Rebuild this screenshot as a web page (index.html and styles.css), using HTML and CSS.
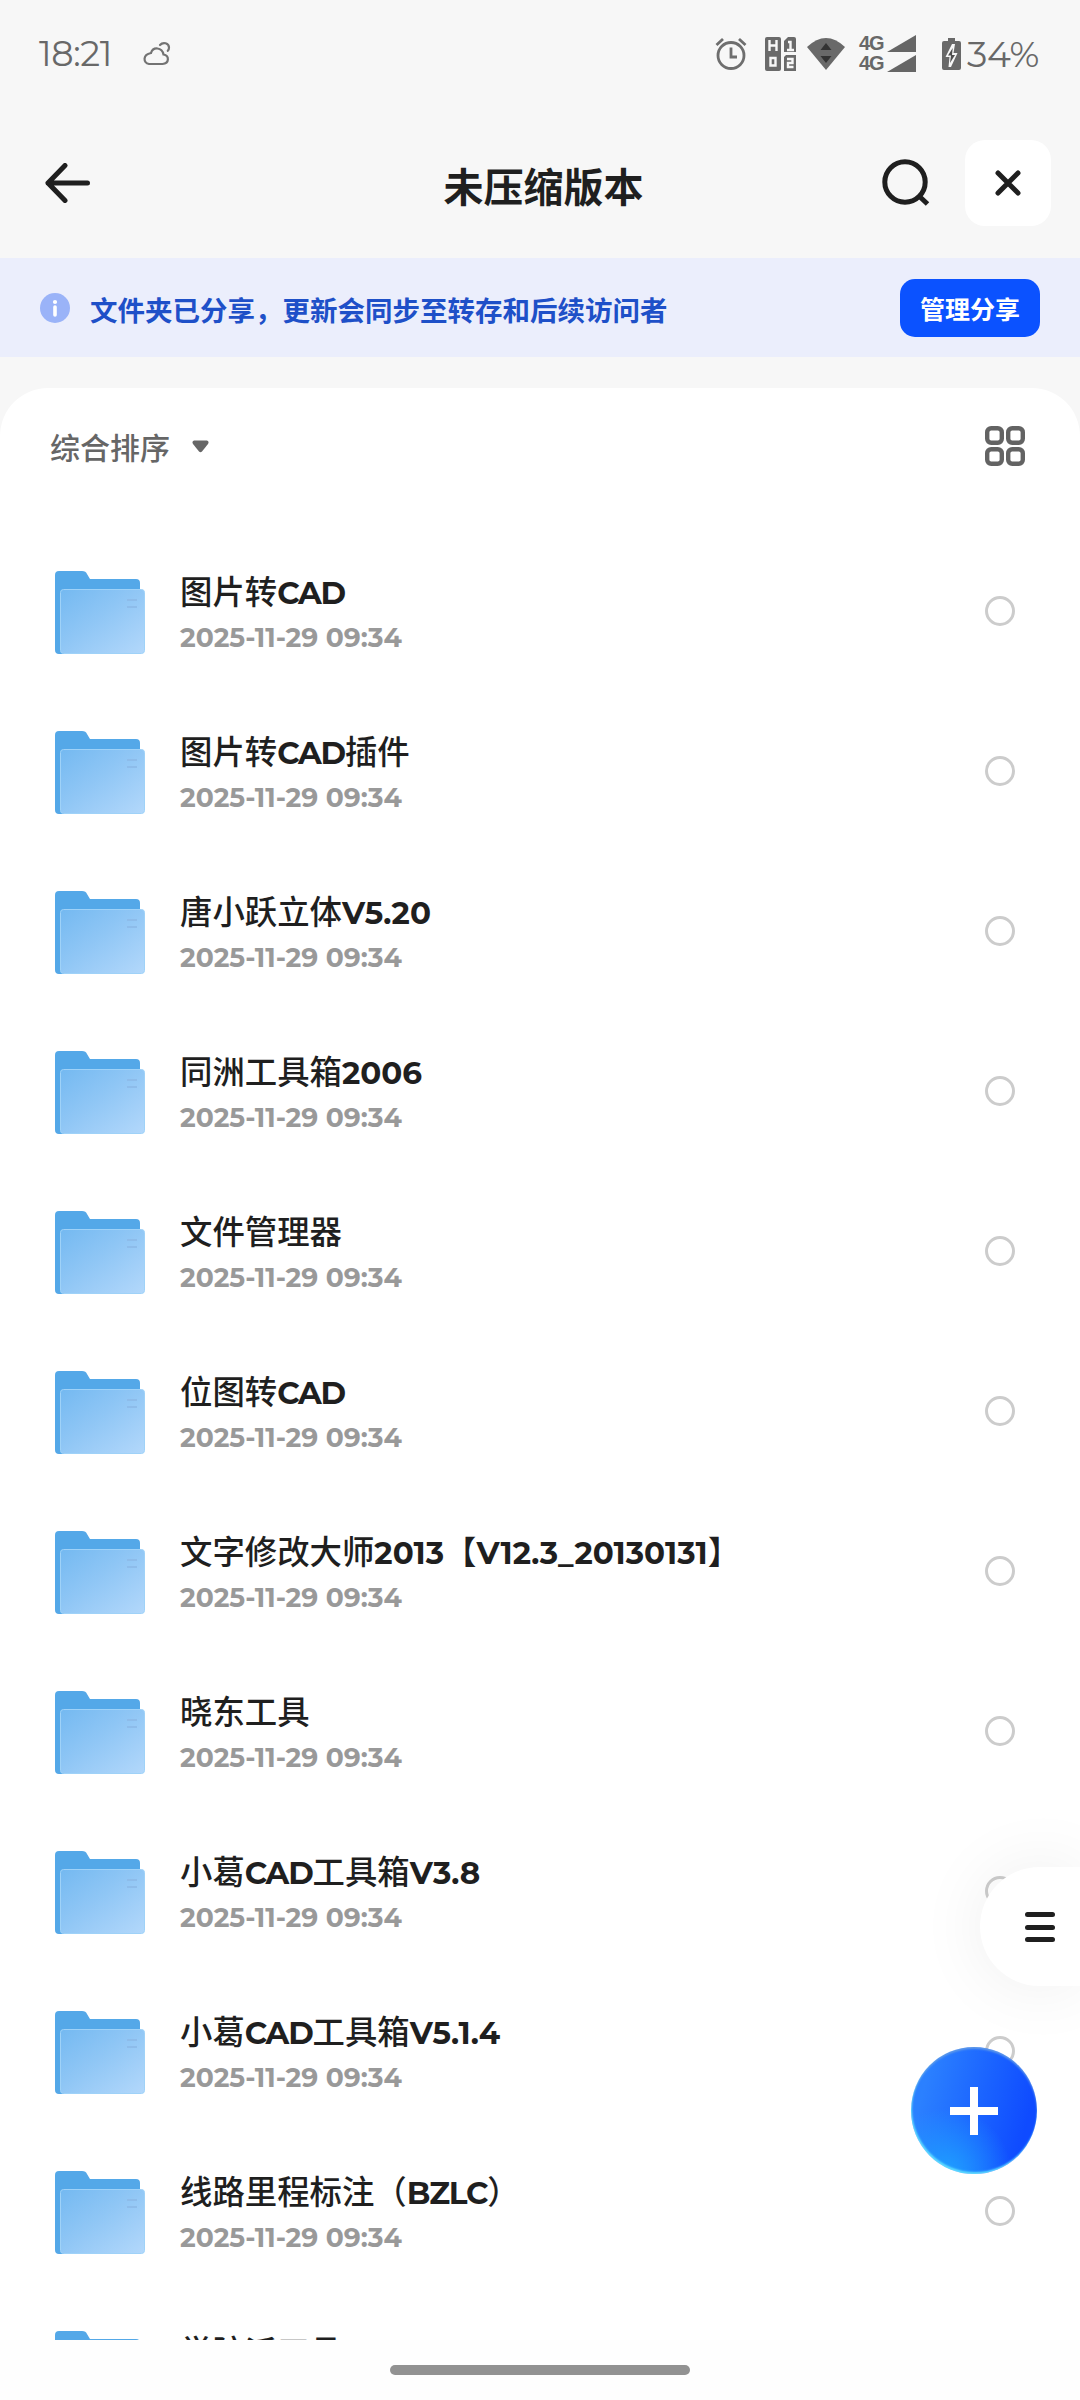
FILE: index.html
```html
<!DOCTYPE html>
<html lang="zh-CN">
<head>
  <meta charset="UTF-8" />
  <meta name="viewport" content="width=device-width, initial-scale=1.0"/>
  <title>未压缩版本</title>
  <link rel="stylesheet" href="styles.css">
</head>
<body>
  <!-- 状态栏 -->
  <div class="status-bar">
    <span class="time">18:21</span>
    <svg class="weather" width="28" height="26" viewBox="0 0 28 26" fill="none" stroke="#737373" stroke-width="2.2" stroke-linecap="round">
      <path d="M6 23H19.500C26.500 22.500 26.500 14.500 20.500 13.500C19 6 10 5.500 8 12C-.5 13.500 0 22 6 23Z"/>
      <path d="M17 4C20 .5 26 2 26 6.500C26 8 25.500 9 24.800 9.800"/>
    </svg>
    <div class="status-icons">
      <svg class="alarm" width="32" height="34" viewBox="0 0 32 34" fill="none" stroke="#6e6e6e" stroke-width="2.800">
        <circle cx="16" cy="18.500" r="13"/>
        <path d="M16 10.500V20H22M1.500 8L8 2M30.500 8L24 2"/>
      </svg>
      <svg class="hd" width="32" height="34" viewBox="0 0 32 34">
        <rect x="0" y="0" width="16" height="34" rx="2" fill="#6a6a6a"/>
        <path d="M23 0H29Q31 0 31 2V15H19V4Z" fill="#6a6a6a"/>
        <path d="M21 18H31V34H19V20Z" fill="#6a6a6a"/>
        <path d="M4.500 3V14M11.500 3V14M4.500 8.500H11.500M5.500 21H10.500V28.500H5.500ZM23 5H25.500V13M22 13H29M22 22H27.500V26H23V30H28.500" fill="none" stroke="#f7f7f7" stroke-width="2.400"/>
      </svg>
      <svg class="wifi" width="38" height="32" viewBox="0 0 38 32">
        <path d="M0 9Q19 -9 38 9L19 32Z" fill="#696969"/>
        <path d="M13.500 12L19 5L24.500 12ZM13.500 18L19 25L24.500 18Z" fill="#333"/>
      </svg>
      <div class="networks">
        <div class="network"><span>4G</span><svg width="29" height="17" viewBox="0 0 29 17"><path d="M0 17L29 0V17Z" fill="#666"/></svg></div>
        <div class="network"><span>4G</span><svg width="29" height="17" viewBox="0 0 29 17"><path d="M0 17L29 0V17Z" fill="#666"/></svg></div>
      </div>
      <svg class="battery" width="19" height="32" viewBox="0 0 19 32">
        <path d="M6 0H13V3H17Q19 3 19 5V30Q19 32 17 32H2Q0 32 0 30V5Q0 3 2 3H6Z" fill="#696969"/>
        <path d="M10 6L3.500 19H7.500L6.500 29H9L15.500 15H11.500L13 6Z" fill="#f7f7f7"/>
        <path d="M10.700 10L6 17.500H9L8 25L13 17H10Z" fill="#4f4f4f"/>
      </svg>
      <span class="percent">34%</span>
    </div>
  </div>

  <!-- 标题栏 -->
  <div class="title-bar">
    <svg class="back" width="46" height="40" viewBox="0 0 46 40" fill="none" stroke="#1f1f1f" stroke-width="5" stroke-linecap="round" stroke-linejoin="round">
      <path d="M20 2.500L3 20L20 37.500M3 20H42.500"/>
    </svg>
    <h1>未压缩版本</h1>
    <div class="title-actions">
      <svg class="search" width="48" height="48" viewBox="0 0 48 48" fill="none" stroke="#1f1f1f" stroke-width="5">
        <circle cx="23" cy="23" r="20.200"/>
        <path d="M37 37L45.500 45"/>
      </svg>
      <div class="close">
        <svg width="26" height="26" viewBox="0 0 26 26" stroke="#1f1f1f" stroke-width="5" stroke-linecap="round">
          <path d="M3 3L23 23M23 3L3 23"/>
        </svg>
      </div>
    </div>
  </div>

  <!-- 分享提示 -->
  <div class="notice">
    <svg width="30" height="30" viewBox="0 0 30 30">
      <circle cx="15" cy="15" r="15" fill="#9ab3f8"/>
      <circle cx="15" cy="9" r="2.100" fill="#fff"/>
      <path d="M15 14V22" stroke="#fff" stroke-width="3.600" stroke-linecap="round"/>
    </svg>
    <span class="notice-text">文件夹已分享，更新会同步至转存和后续访问者</span>
    <button class="manage">管理分享</button>
  </div>

  <!-- 文件列表 -->
  <div class="panel">
    <div class="sort-bar">
      <span>综合排序</span>
      <svg class="arrow" width="17" height="13" viewBox="0 0 17 13"><path d="M2 .5H15Q17.500 1.500 16 4L10 11.500Q8.500 13 7 11.500L1 4Q-.5 1.500 2 .5Z" fill="#666"/></svg>
      <svg class="grid-icon" width="40" height="40" viewBox="0 0 40 40" fill="none" stroke="#636363" stroke-width="4.400">
        <rect x="2.200" y="2.200" width="14.600" height="14.600" rx="4"/>
        <rect x="23.200" y="2.200" width="14.600" height="14.600" rx="4"/>
        <rect x="2.200" y="23.200" width="14.600" height="14.600" rx="4"/>
        <rect x="23.200" y="23.200" width="14.600" height="14.600" rx="4"/>
      </svg>
    </div>
    <div id="fileList" class="file-list"></div>
  </div>

  <div class="side-menu"><i></i><i></i><i></i></div>
  <div class="add-button">
    <svg width="48" height="48" viewBox="0 0 48 48"><path d="M24 0V48M0 24H48" stroke="#fff" stroke-width="8"/></svg>
  </div>

  <div class="home-area"><div class="home-bar"></div></div>

  <svg width="0" height="0" class="defs">
    <defs>
      <linearGradient id="front" x1="0" y1="0" x2="1" y2="1">
        <stop offset="0" stop-color="#74b9f1"/>
        <stop offset=".45" stop-color="#8fc6f5"/>
        <stop offset="1" stop-color="#b3d8fb"/>
      </linearGradient>
      <symbol id="folder" viewBox="0 0 90 83">
        <path d="M4 0H27Q31 0 32 3L35 8H81Q85 8 85 12V60L30 83H4Q0 83 0 79V4Q0 0 4 0Z" fill="#54a8e8"/>
        <rect x="5.500" y="18.500" width="84" height="64" rx="3" fill="url(#front)" stroke="#9fd2f8"/>
        <path d="M72 29H82M72 36H82" stroke="#8dbcea" stroke-width="2"/>
      </symbol>
    </defs>
  </svg>

  <script>
    const files = [
      '图片转CAD',
      '图片转CAD插件',
      '唐小跃立体V5.20',
      '同洲工具箱2006',
      '文件管理器',
      '位图转CAD',
      '文字修改大师2013【V12.3_20130131】',
      '晓东工具',
      '小葛CAD工具箱V3.8',
      '小葛CAD工具箱V5.1.4',
      '线路里程标注（BZLC）',
      '学院派工具'
    ];

    const list = document.getElementById('fileList');
    files.forEach(name => {
      const row = document.createElement('div');
      row.className = 'file-row';
      const label = name.replace(/[\w.]+/g, s => `<b class="${/\d/.test(s) ? 'num' : 'word'}">${s}</b>`);
      row.innerHTML = `
        <svg class="folder" width="90" height="83"><use href="#folder"/></svg>
        <div class="file-info">
          <div class="file-name">${label}</div>
          <div class="file-date">2025-11-29 09:34</div>
        </div>
        <span class="radio"></span>`;
      list.appendChild(row);
    });
  </script>
</body>
</html>
```

FILE: styles.css
```css
* {
  box-sizing: border-box;
}

body {
  margin: 0;
  width: 1080px;
  height: 2400px;
  overflow: hidden;
  display: flex;
  flex-direction: column;
  position: relative;
  background: #f7f7f7;
  color: #1f1f1f;
  font-family: Montserrat, "Noto Sans CJK SC", sans-serif;
}

svg {
  display: block;
  flex-shrink: 0;
}

/* 状态栏 */
.status-bar {
  height: 107px;
  display: flex;
  align-items: center;
  padding: 0 40px 0 39px;
  color: #686868;
  font-family: Montserrat, "Open Sans", sans-serif;
}

.time {
  width: 104px;
  font-size: 35px;
  letter-spacing: -0.4px;
}

.status-icons {
  margin-left: auto;
  display: flex;
  align-items: center;
}

.hd {
  margin-left: 18px;
}

.wifi {
  margin-left: 10px;
}

.networks {
  margin-left: 14px;
  display: grid;
  gap: 3px;
}

.network {
  display: flex;
  align-items: flex-end;
  gap: 3px;
  height: 17px;
}

.network span {
  width: 25px;
  font: bold 20px/17px "Liberation Sans", sans-serif;
  letter-spacing: -1px;
}

.battery {
  margin-left: 26px;
}

.percent {
  margin-left: 6px;
  width: 73px;
  font-size: 36px;
  letter-spacing: -0.3px;
  white-space: nowrap;
}

/* 标题栏 */
.title-bar {
  height: 151px;
  display: grid;
  grid-template-columns: 1fr auto 1fr;
  align-items: center;
  padding: 0 29px 0 45px;
}

.title-bar h1 {
  margin: 10px 9px 0 0;
  font-size: 40px;
  line-height: 60px;
  font-weight: 700;
}

.title-actions {
  display: flex;
  align-items: center;
  justify-content: flex-end;
  gap: 35px;
}

.close {
  width: 86px;
  height: 86px;
  border-radius: 20px;
  background: #fff;
  display: flex;
  align-items: center;
  justify-content: center;
}

/* 分享提示 */
.notice {
  height: 99px;
  display: flex;
  align-items: center;
  padding: 0 40px;
  background: #ebeefc;
}

.notice-text {
  margin: 3px 0 0 20px;
  color: #1e50c8;
  font-size: 27.5px;
  font-weight: 600;
}

.manage {
  margin-left: auto;
  width: 140px;
  height: 58px;
  padding: 0;
  border: none;
  border-radius: 15px;
  background: #0b52ff;
  color: #fff;
  font: 600 25px "Noto Sans CJK SC", sans-serif;
}

/* 文件列表 */
.panel {
  margin-top: 31px;
  height: 1952px;
  overflow: hidden;
  background: #fff;
  border-radius: 48px 48px 0 0;
}

.sort-bar {
  height: 143px;
  display: flex;
  align-items: center;
  padding: 0 55px 28px 50px;
  color: #666;
  font-size: 30px;
  font-weight: 500;
}

.arrow {
  margin: 2px 0 0 22px;
}

.grid-icon {
  margin-left: auto;
}

.file-row {
  height: 160px;
  display: flex;
  align-items: center;
  padding: 0 65px 0 55px;
}

.folder {
  margin-top: 3px;
}

.file-info {
  margin-left: 35px;
  padding-top: 5px;
}

.file-name {
  font-size: 32.4px;
  line-height: 48px;
  font-weight: 500;
  white-space: nowrap;
}

.file-name b {
  font-family: Montserrat, Inter, sans-serif;
  font-weight: 700;
  font-size: 31px;
}

.file-name .word {
  letter-spacing: -1.2px;
}

.file-date {
  color: #999;
  font: 700 26.6px/42px Montserrat, Inter, sans-serif;
  white-space: nowrap;
}

.radio {
  margin-left: auto;
  width: 30px;
  height: 30px;
  border: 3px solid #ccc;
  border-radius: 50%;
}

/* 悬浮按钮 */
.side-menu {
  position: absolute;
  right: 0;
  top: 1867px;
  width: 100px;
  height: 119px;
  padding: 45px 25px 44px 45px;
  display: flex;
  flex-direction: column;
  justify-content: space-between;
  background: #fff;
  border-radius: 60px 0 0 60px;
  box-shadow: 0 0 70px rgba(0, 0, 0, 0.07);
}

.side-menu i {
  height: 5px;
  border-radius: 3px;
  background: #1f1f1f;
}

.add-button {
  position: absolute;
  left: 911px;
  top: 2047px;
  width: 126px;
  height: 127px;
  display: flex;
  align-items: center;
  justify-content: center;
  border-radius: 50%;
  background: radial-gradient(circle at 28% 100%, #1fa0ff 0%, rgba(31, 140, 255, 0) 42%), linear-gradient(105deg, #2b80ff 15%, #1a62ff 55%, #0f4bff 85%);
  box-shadow: inset 1px -2px 2px #5fdcff, inset 0 2px 2px #5e98e8;
}

.home-area {
  flex: 1;
  padding-top: 25px;
  background: #fefefe;
}

.home-bar {
  width: 300px;
  height: 10px;
  margin: 0 auto;
  border-radius: 5px;
  background: #929292;
}

.defs {
  position: absolute;
}
```
